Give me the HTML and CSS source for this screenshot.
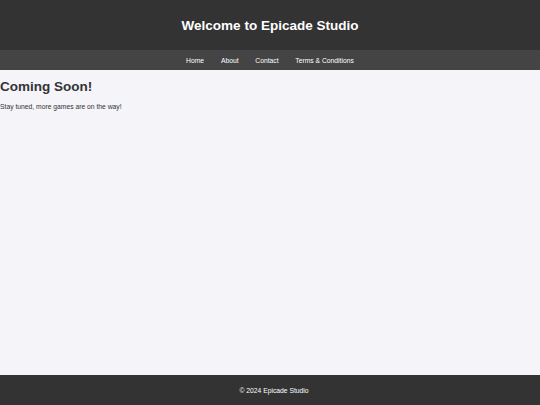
FILE: index.html
```html
<!DOCTYPE html>
<html lang="en">
<head>
<meta charset="utf-8">
<title>Epicade Studio</title>
<link rel="stylesheet" href="styles.css">
</head>
<body>
<div class="page">
  <header class="site-header">
    <h1 class="site-title">Welcome to Epicade Studio</h1>
  </header>
  <nav class="site-nav">
    <a href="#" class="nav-link">Home</a>
    <a href="#" class="nav-link">About</a>
    <a href="#" class="nav-link">Contact</a>
    <a href="#" class="nav-link">Terms &amp; Conditions</a>
  </nav>
  <main class="content">
    <h2 class="content-title">Coming Soon!</h2>
    <p class="content-text">Stay tuned, more games are on the way!</p>
  </main>
  <footer class="site-footer">
    <p class="footer-text">&copy; 2024 Epicade Studio</p>
  </footer>
</div>
</body>
</html>
```

FILE: styles.css
```css
html, body {
  margin: 0;
  padding: 0;
  height: 100%;
}
body {
  font-family: "Liberation Sans", Arial, sans-serif;
  font-size: 6.75px;
  background: #f4f4f9;
  color: #333;
}
.page {
  display: flex;
  flex-direction: column;
  min-height: 100vh;
}
.site-header {
  background: #333;
  height: 50px;
  display: flex;
  align-items: center;
  justify-content: center;
}
.site-title {
  margin: 0;
  color: #fff;
  font-size: 13.5px;
  font-weight: bold;
}
.site-nav {
  background: #444;
  height: 20px;
  display: flex;
  align-items: center;
  justify-content: center;
}
.nav-link {
  color: #fff;
  text-decoration: none;
  margin: 0 8.4px;
  font-size: 6.75px;
}
.content {
  flex: 1;
}
.content-title {
  margin: 9px 0 8.5px;
  font-size: 13.5px;
  font-weight: bold;
  color: #333;
}
.content-text {
  margin: 8.5px 0;
}
.site-footer {
  background: #333;
  height: 30px;
  padding-left: 8px;
  display: flex;
  align-items: center;
  justify-content: center;
}
.footer-text {
  margin: 0;
  color: #fff;
}
```
